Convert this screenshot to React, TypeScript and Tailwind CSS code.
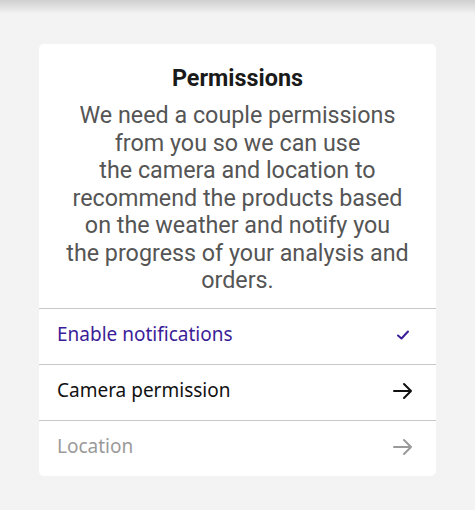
import React from 'react';

const rows = [
  { label: 'Enable notifications', state: 'done' },
  { label: 'Camera permission', state: 'next' },
  { label: 'Location', state: 'disabled' },
];

function Check() {
  return (
    <svg width="14" height="12" viewBox="0 0 14 12" fill="none">
      <path d="M2 6.5 L5.5 9.5 L12 2.5" stroke="#3b1d98" strokeWidth="2" strokeLinecap="round" strokeLinejoin="round" />
    </svg>
  );
}

function Arrow({ color }: { color: string }) {
  return (
    <svg width="20" height="18" viewBox="0 0 20 18" fill="none">
      <path d="M1 9 H18 M11 2 L18 9 L11 16" stroke={color} strokeWidth="2" strokeLinecap="round" strokeLinejoin="round" />
    </svg>
  );
}

export default function App() {
  return (
    <div className="relative w-[475px] h-[510px] bg-[#f3f3f3] overflow-hidden">
      <div className="absolute top-0 left-0 right-0 h-[14px] bg-gradient-to-b from-[#cfcfcf] to-[#f3f3f3]" />
      <div className="pt-[44px] px-[39px]">
        <div className="bg-white rounded-[5px] overflow-hidden">
          <div className="pt-[20px] pb-[13px] px-1 text-center font-['Roboto',sans-serif]">
            <h1 className="text-[23.4px] leading-[28px] font-bold text-[#1a1a1a]">Permissions</h1>
            <p className="mt-[10px] text-[23.3px] leading-[27.5px] text-[#555555]">
              We need a couple permissions
              <br />
              from you so we can use
              <br />
              the camera and location to
              <br />
              recommend the products based
              <br />
              on the weather and notify you
              <br />
              the progress of your analysis and
              <br />
              orders.
            </p>
          </div>
          {rows.map((r) => (
            <div
              key={r.label}
              className="h-[56px] border-t border-[#c8c8c8] flex items-center justify-between pl-[18px] pr-[23px] pb-[3px] font-['Noto_Sans',sans-serif] text-[19px]"
            >
              <span
                className={
                  r.state === 'done'
                    ? 'text-[#3b1d98]'
                    : r.state === 'next'
                    ? 'text-[#111111]'
                    : 'text-[#9a9a9a]'
                }
              >
                {r.label}
              </span>
              {r.state === 'done' ? (
                <span className="pr-[3px]"><Check /></span>
              ) : (
                <Arrow color={r.state === 'next' ? '#111111' : '#9a9a9a'} />
              )}
            </div>
          ))}
        </div>
      </div>
    </div>
  );
}
